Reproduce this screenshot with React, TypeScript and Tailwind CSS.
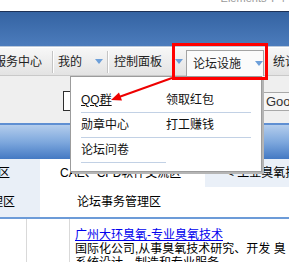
import React from "react"

const font = "font-['Liberation_Sans','Noto_Sans_CJK_SC',sans-serif]"

function Arrow() {
  return (
    <svg width="8" height="5" viewBox="0 0 8 5" className="shrink-0">
      <path d="M0 0 H8 L4 5 Z" fill="#6d9fd9" />
    </svg>
  )
}

function Sep() {
  return <span className="block w-[2px] h-[22px] border-l border-[#c4c4c4] border-r border-r-white shrink-0" />
}

const menu = [
  { label: "QQ群", hover: true },
  { label: "领取红包" },
  { label: "勋章中心" },
  { label: "打工赚钱" },
  { label: "论坛问卷" },
]

export default function App() {
  return (
    <div className={`relative w-[289px] h-[262px] overflow-hidden bg-white text-[12px] text-black ${font}`}>
      {/* top strip */}
      <div className="h-[11px] overflow-hidden flex justify-end pr-[4px]">
        <span className="-mt-[9px] text-[11px] text-[#9a9a9a] leading-[14px] whitespace-nowrap">Elements T 4</span>
      </div>
      <div className="h-[1px] bg-[#1c3156]" />
      <div className="h-[34px] bg-gradient-to-b from-[#3463a2] to-[#4c7cbc]" />
      <div className="h-[1px] bg-[#bcc9da]" />

      {/* nav */}
      <nav className="relative z-20 h-[29px] flex items-center border-t border-white bg-gradient-to-b from-[#f7f7f7] to-[#e3e3e3] border-b border-b-[#c9c9c9] text-[#222] whitespace-nowrap">
        <span className="-ml-[6px] shrink-0">服务中心</span>
        <span className="ml-[10px] shrink-0"><Sep /></span>
        <span className="ml-[4px] shrink-0">我的</span>
        <span className="ml-[13px] shrink-0"><Arrow /></span>
        <span className="ml-[4px] shrink-0"><Sep /></span>
        <span className="ml-[5px] shrink-0">控制面板</span>
        <span className="ml-[13px] shrink-0"><Arrow /></span>
        <div className="ml-[3px] shrink-0 self-end -mb-[1px] h-[26px] w-[78px] flex items-center pl-[6px] bg-[#fbfbfb] border border-[#a3a3a3] border-b-0">
          <span>论坛设施</span>
          <span className="ml-[14px]"><Arrow /></span>
        </div>
        <span className="ml-[9px] shrink-0">统计</span>
      </nav>

      {/* search strip */}
      <div className="h-[47px] bg-[#efefef] flex items-start">
        <div className="shrink-0 ml-[63px] mt-[15px] w-[160px] h-[20px] border border-[#2e2e2e] bg-white" />
        <div className="shrink-0 ml-[39px] mt-[16px] w-[45px] h-[19px] border border-[#a8a8a8] bg-[#f6f6f6] flex items-center pl-[3px] text-[13px] text-[#333] overflow-hidden">
          Google
        </div>
      </div>

      {/* table header */}
      <div className="h-[36px] border-t-2 border-[#5f8fd2] bg-gradient-to-b from-[#b4cdec] via-[#7ea8dd] to-[#4479c3]" />

      {/* rows */}
      <div className="h-[28px] flex items-center whitespace-nowrap">
        <div className="shrink-0 w-[40px] h-full bg-[#e9eff7] flex items-center overflow-hidden">
          <span className="-ml-[26px]">交流区</span>
        </div>
        <div className="shrink-0 w-[165px] h-full flex items-center pl-[20px]">CAE、CFD软件交流区</div>
        <div className="flex-1 h-full bg-[#eaf0f8] flex items-center pl-[22px] overflow-hidden">&lt; 工业臭氧技术</div>
      </div>
      <div className="h-[30px] flex items-center whitespace-nowrap">
        <div className="shrink-0 w-[40px] h-full bg-[#e9eff7] flex items-center overflow-hidden">
          <span className="-ml-[21px]">管理区</span>
        </div>
        <div className="h-full flex items-center pl-[37px]">论坛事务管理区</div>
      </div>
      <div className="h-[2px] bg-[#6c9bd8]" />

      {/* lower block */}
      <div className="flex h-[60px]">
        <div className="shrink-0 w-[27px] border-r border-[#d9d9d9]" />
        <div className="shrink-0 w-[43px] border-r border-[#d9d9d9]" />
        <div className="pl-[5px] pt-[9px] leading-[14px] whitespace-nowrap">
          <a className="text-[#0000ee] underline">广州大环臭氧-专业臭氧技术</a>
          <div>国际化公司,从事臭氧技术研究、开发 臭</div>
          <div>系统设计、制造和专业服务</div>
        </div>
      </div>

      {/* dropdown menu */}
      <div className="absolute z-10 left-[70px] top-[76px] w-[192px] h-[96px] bg-white border border-[#9c9c9c] shadow-[2px_2px_0_#b5b5b5] pt-[11px] pl-[10px]">
        <div className="grid grid-cols-[85px_85px]">
          {menu.map((m) => (
            <div
              key={m.label}
              className="h-[25px] flex items-center border-b border-[#c2d1e5] text-[#111]"
            >
              <span className={m.hover ? "underline" : ""}>{m.label}</span>
            </div>
          ))}
        </div>
      </div>

      {/* annotation */}
      <div className="absolute z-30 left-[172px] top-[43px] w-[96px] h-[37px] border-[3px] border-[#ff0000]" />
      <svg className="absolute z-30 left-0 top-0 pointer-events-none" width="289" height="262">
        <line x1="172" y1="78" x2="119" y2="97" stroke="#ee0000" strokeWidth="2" />
        <polygon points="111,100 122,100.6 119,92.6" fill="#ee0000" />
      </svg>
    </div>
  )
}
